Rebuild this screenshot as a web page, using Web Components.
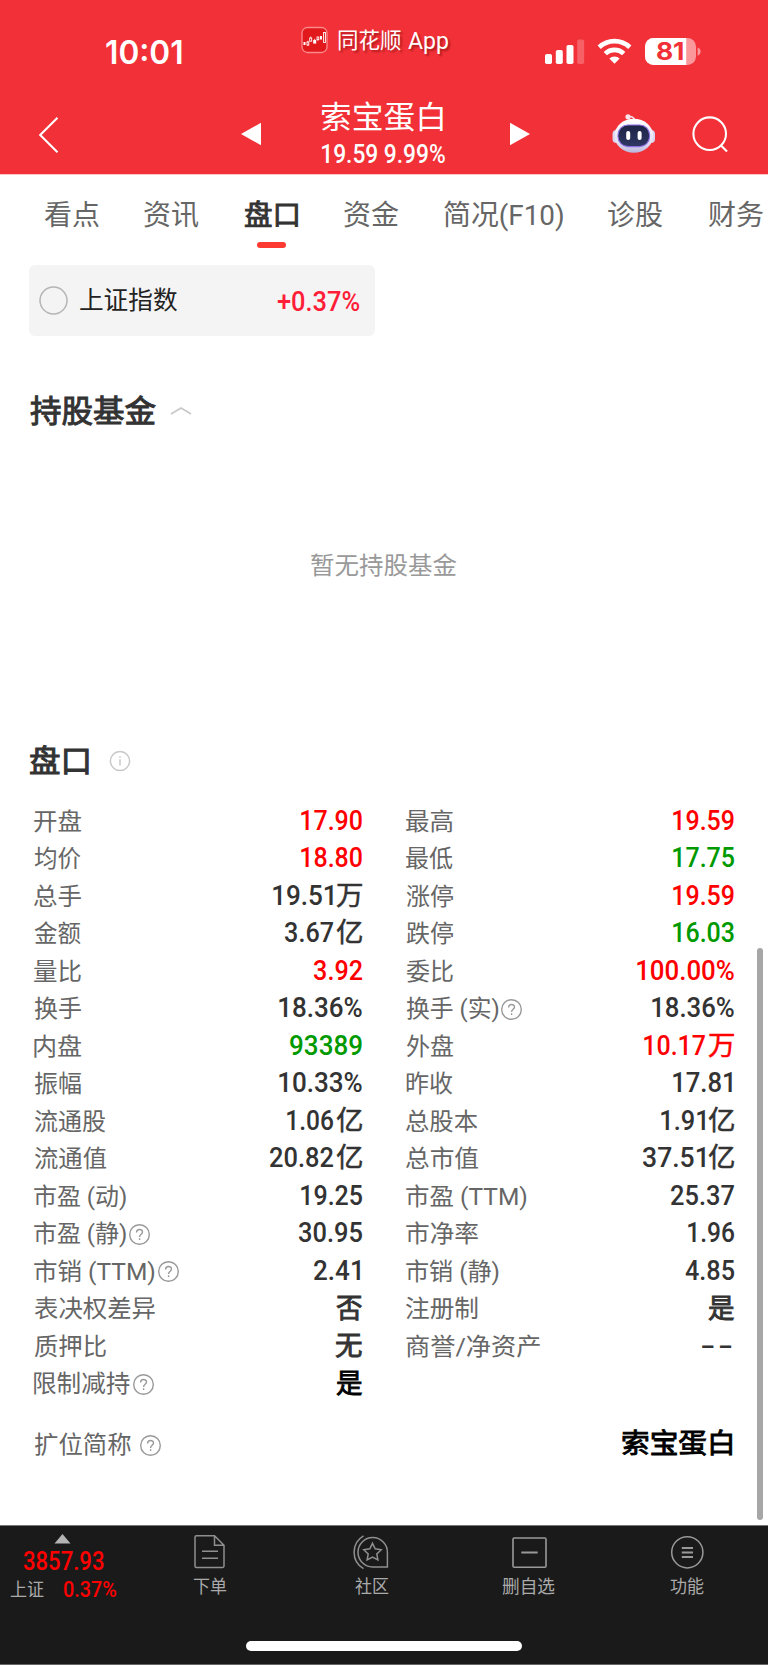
<!DOCTYPE html>
<html lang="zh-CN">
<head>
<meta charset="utf-8">
<title>索宝蛋白 盘口</title>
<style>
  html, body { margin: 0; background: #fff; }
  body { width: 768px; height: 1665px; overflow: hidden; font-family: Roboto, "Noto Sans CJK SC", sans-serif; }
</style>
</head>
<body>
<stock-page></stock-page>

<template id="t-page">
  <style>
    :host { display: flex; flex-direction: column; width: 768px; height: 1665px; position: relative; background: #fff; color: #333; }
    main { flex: 1; display: flex; flex-direction: column; align-items: flex-start; }
    .empty { align-self: stretch; display: flex; justify-content: center; align-items: center; height: 100px; margin-top: 80px; font-size: 24px; color: #999; }
    .scroll { position: absolute; left: 757px; top: 948px; width: 6px; height: 572px; border-radius: 3px; background: #a6a6a6; }
  </style>
  <app-header></app-header>
  <stock-tabs></stock-tabs>
  <main>
    <index-chip></index-chip>
    <section-title style="margin-top:50px"><fit-text w="126">持股基金</fit-text>
      <svg slot="icon" style="margin:-2px 0 0 14px" width="22" height="9" viewBox="0 0 22 9" fill="none" stroke="#c8c8c8" stroke-width="1.7"><path d="M1 8 11 2 21 8"/></svg>
    </section-title>
    <div class="empty"><fit-text w="146">暂无持股基金</fit-text></div>
    <section-title style="margin-top:120px"><fit-text w="59">盘口</fit-text>
      <svg slot="icon" style="margin-left:20px" width="22" height="22" viewBox="0 0 22 22" fill="none" stroke="#c8c8c8" stroke-width="1.5"><circle cx="11" cy="11" r="9.6"/><path d="M11 9.3V15.4M11 6.2V7.8"/></svg>
    </section-title>
    <quote-grid></quote-grid>
  </main>
  <bottom-bar></bottom-bar>
  <div class="scroll"></div>
</template>

<template id="t-header">
  <style>
    :host { display: block; height: 174px; background: #f23037; color: #fff; border-bottom: 1px solid #fbc5c8; flex: none; }
    .status { height: 90px; display: flex; align-items: flex-start; }
    .time { margin: 37px 0 0 106px; font: 600 32px/32px Inter, sans-serif; }
    .app { display: flex; align-items: center; height: 28px; margin: 26px 0 0 119px; font-size: 21.5px; text-shadow: 2px 2px 2px rgba(90,0,0,.45); }
    .sys { display: flex; align-items: flex-end; margin: 37px 0 0 97px; }
    .nav { height: 84px; display: flex; align-items: flex-start; }
    .title { display: flex; flex-direction: column; align-items: center; margin: 12px 0 0 59px; width: 124px; }
    svg { display: block; flex: none; }
    .batt { position: relative; width: 56px; height: 28px; margin-left: 12px; }
    .batt fit-text { position: absolute; left: 12px; top: 3px; font: 700 24px/24px Inter, sans-serif; color: #f23037; }
  </style>
  <div class="status">
    <div class="time"><fit-text w="76">10:01</fit-text></div>
    <div class="app">
      <svg width="27" height="28" viewBox="0 0 27 28"><rect x="1" y="1.5" width="25" height="25" rx="5.5" fill="#e2191c" stroke="#fa8a8c" stroke-width="1.3"/><g fill="#fff"><rect x="2.5" y="16" width="2" height="3"/><rect x="12.2" y="14" width="3" height="3.6"/><rect x="19" y="10" width="2" height="3.5"/></g><g fill="none" stroke="#fff" stroke-width=".9"><rect x="6" y="16" width="1.8" height="3"/><path d="M6.9 14.8v1.2M6.9 19v1"/><rect x="8.7" y="12" width="2" height="3.2"/><path d="M9.7 10.6V12M13.7 12.8v1.2M16.9 13.6v1.2"/><rect x="16" y="11" width="1.8" height="2.6"/><rect x="22.6" y="6.5" width="1.8" height="10"/></g></svg>
      <fit-text w="63" style="margin-left:10px;position:relative;top:1px">同花顺</fit-text><fit-text w="40" style="margin-left:7px;position:relative;top:1px;font-size:23px">App</fit-text>
    </div>
    <div class="sys">
      <svg width="40" height="28" viewBox="0 0 40 28" fill="#fff"><rect x="0" y="17" width="7" height="10" rx="1.8"/><rect x="10.8" y="13" width="7" height="14" rx="1.8"/><rect x="21.5" y="8" width="7" height="19" rx="1.8"/><rect x="32.2" y="2.5" width="7" height="24.5" rx="1.8" fill="#f66067"/></svg>
      <svg style="margin-left:11px" width="37" height="28" viewBox="0 0 37 28" fill="none" stroke="#fff" stroke-width="4.7"><path d="M3.2 10.3a22 22 0 0 1 30.6 0"/><path d="M9.3 16.6a13.2 13.2 0 0 1 18.4 0"/><path d="M18.5 26.7 13.3 21.6a7.8 7.8 0 0 1 10.4 0z" fill="#fff" stroke="none"/></svg>
      <div class="batt">
        <svg width="56" height="28" viewBox="0 0 56 28"><defs><clipPath id="b"><rect x="0" y="1" width="51" height="27" rx="8.5"/></clipPath></defs><g clip-path="url(#b)"><rect y="1" width="51" height="27" fill="#fa989c"/><rect y="1" width="41.2" height="27" fill="#fff"/></g><path d="M52.6 10.5c4 1.2 4 7 0 8.2z" fill="#fa989c"/></svg>
        <fit-text w="26">81</fit-text>
      </div>
    </div>
  </div>
  <div class="nav">
    <svg style="margin:26px 0 0 38px" width="22" height="38" viewBox="0 0 22 38" fill="none" stroke="#fff" stroke-width="2.1"><path d="M19.5 1.7 2.2 19 19.5 36.3"/></svg>
    <svg style="margin:32px 0 0 180px" width="21" height="24" viewBox="0 0 21 24" fill="#fff"><path d="M1 12 21 .7V23.3z"/></svg>
    <div class="title">
      <fit-text w="122" style="font-size:31px">索宝蛋白</fit-text>
      <fit-text w="123" style="font-size:25.5px;font-weight:500;margin-top:9px;position:relative;left:1px">19.59 9.99%</fit-text>
    </div>
    <svg style="margin:32px 0 0 66px" width="21" height="24" viewBox="0 0 21 24" fill="#fff"><path d="M0 .7 20 12 0 23.3z"/></svg>
    <svg style="margin:23px 0 0 81px" width="44" height="42" viewBox="0 0 44 42">
      <defs><linearGradient id="h" x1="0" y1="0" x2="0" y2="1"><stop offset="0" stop-color="#fff"/><stop offset=".7" stop-color="#e4e0f2"/><stop offset="1" stop-color="#b9b5dc"/></linearGradient><linearGradient id="f" x1="0" y1="0" x2="0" y2="1"><stop offset="0" stop-color="#1c2446"/><stop offset="1" stop-color="#2f3763"/></linearGradient></defs>
      <circle cx="16" cy="3.8" r="2.6" fill="#f6e6ee"/><path d="M16 3.6c4-.4 6.3 1.2 6.6 4" fill="none" stroke="#f6dfe8" stroke-width="1.6"/>
      <rect x=".5" y="17" width="8" height="13" rx="4" fill="#d9d5ee"/><rect x="35" y="17" width="8" height="13" rx="4" fill="#d9d5ee"/>
      <ellipse cx="21.8" cy="22.8" rx="19.4" ry="17" fill="url(#h)"/>
      <rect x="6" y="12" width="31.6" height="21.6" rx="10" fill="url(#f)" stroke="#8b6ee0" stroke-width="1.1"/>
      <rect x="14.2" y="18" width="4" height="9" rx="2" fill="#fff"/><rect x="25.6" y="18" width="4" height="9" rx="2" fill="#fff"/>
    </svg>
    <svg style="margin:25px 0 0 36px" width="38" height="40" viewBox="0 0 38 40" fill="none" stroke="#fff" stroke-width="2.1"><circle cx="17.7" cy="18.7" r="16.3"/><path d="M28.5 30 35 36.5"/></svg>
  </div>
</template>

<template id="t-tabs">
  <style>
    :host { display: flex; height: 90px; flex: none; padding-left: 44px; box-sizing: border-box; gap: 45px; overflow: hidden; font-size: 28px; color: #666; }
    div { display: flex; flex-direction: column; align-items: center; padding-top: 27px; }
    .on { color: #333; -webkit-text-stroke: .9px #333; }
    .on::after { content: ""; width: 29px; height: 6px; border-radius: 3px; background: #fd3a32; margin-top: 12px; }
  </style>
  <div><fit-text w="55">看点</fit-text></div><div><fit-text w="55">资讯</fit-text></div><div class="on" style="margin:0 1px"><fit-text w="53">盘口</fit-text></div><div><fit-text w="55">资金</fit-text></div><div><fit-text w="119">简况(F10)</fit-text></div><div><fit-text w="55">诊股</fit-text></div><div><fit-text w="55">财务</fit-text></div>
</template>

<template id="t-chip">
  <style>
    :host { display: flex; align-items: center; box-sizing: border-box; width: 346px; height: 71px; margin-left: 29px; padding: 0 15px 0 10px; border-radius: 6px; background: #f4f4f4; font-size: 24.5px; color: #222; }
    svg { margin: 0 12px 0 0; flex: none; }
    .name { position: relative; top: 1px; }
    .up { margin-left: auto; color: #ff1d38; font-weight: 500; font-size: 27.5px; position: relative; top: 1px; }
  </style>
  <svg width="29" height="29" viewBox="0 0 29 29" fill="none" stroke="#b5b5b5" stroke-width="1.5"><circle cx="14.5" cy="14.5" r="13.5"/></svg><fit-text class="name" w="97">上证指数</fit-text><fit-text class="up" w="83">+0.37%</fit-text>
</template>

<template id="t-section">
  <style>
    :host { display: flex; align-items: center; height: 50px; margin-left: 30px; font-size: 31px; color: #333; -webkit-text-stroke: 1px #333; }
    ::slotted(svg) { flex: none; }
  </style>
  <slot></slot><slot name="icon"></slot>
</template>

<template id="t-help">
  <style>:host { display: block; width: 21px; height: 21px; flex: none; margin-left: 3px; } svg { display: block; }</style>
  <svg width="21" height="21" viewBox="0 0 21 21" fill="none" stroke="#999" stroke-width="1.4"><circle cx="10.5" cy="10.5" r="9.8"/><path d="M7.6 8.4c0-3.9 5.9-3.8 5.9-.3 0 2.2-2.9 2.3-2.9 4.8M10.6 14.2v1.7"/></svg>
</template>

<template id="t-grid">
  <style>
    :host { display: block; width: 700px; margin: 17px 0 0 34px; }
    .g { display: grid; grid-template-columns: 328px 328.5px; column-gap: 43.5px; grid-auto-rows: 37.5px; }
    .last { display: flex; margin-top: 23px; height: 38px; }
    .last quote-row { flex: 1; }
  </style>
  <div class="g"></div>
  <div class="last"></div>
</template>

<template id="t-bar">
  <style>
    :host { display: flex; flex-direction: column; height: 140px; box-sizing: border-box; background: #1a1a1a; color: #aaa; flex: none; border-top: 1px solid #777; border-bottom: 1px solid #666; font-size: 18px; }
    .items { position: relative; height: 115px; display: flex; align-items: flex-start; }
    .idx { width: 126px; height: 80px; display: flex; flex-direction: column; }
    .idx svg { margin: 8px 0 7px 54px; display: block; }
    .red { color: #f00; font-weight: 500; }
    .sub { display: flex; align-items: center; margin: 8px 0 0 10px; }
    .it { display: flex; flex-direction: column; align-items: center; gap: 8px; padding-top: 8px; }
    .it svg { display: block; }
    .home { width: 276px; height: 10px; border-radius: 5px; background: #fff; margin: 0 auto; }
  </style>
  <div class="items">
    <div class="idx">
      <svg width="17" height="10" viewBox="0 0 17 10"><path d="M8.5 0 16.5 9.5H.5z" fill="#b4b4b4"/></svg>
      <fit-text class="red" w="81" style="font-size:25.5px;margin-left:22.5px;line-height:20px">3857.93</fit-text>
      <div class="sub"><fit-text w="34">上证</fit-text><fit-text class="red" w="52" style="font-size:21.5px;margin-left:20px">0.37%</fit-text></div>
    </div>
    <div class="it" style="margin-left:67px"><svg style="margin-left:-2px" width="32" height="36" viewBox="0 0 32 36" fill="none" stroke="#8f8f8f" stroke-width="1.5"><path d="M21.5 1.8H3.5a1.5 1.5 0 0 0-1.5 1.5V32a1.5 1.5 0 0 0 1.5 1.5h26a1.5 1.5 0 0 0 1.5-1.5V11.3zV11.3H31M9 17.2H25M9 24.2H25"/></svg><fit-text w="34">下单</fit-text></div>
    <div class="it" style="margin-left:124px"><svg width="38" height="36" viewBox="0 0 38 36" fill="none" stroke="#8f8f8f" stroke-width="1.5"><path d="M12.5 1.8a19 19 0 0 0 0 32.8"/><path d="M36.4 33H21.5a14.7 14.7 0 1 1 14.9-14.5z"/><path d="m21.5 9.3 2.7 5.5 6 .9-4.4 4.2 1.1 6-5.4-2.8-5.4 2.8 1.1-6-4.4-4.2 6-.9z"/></svg><fit-text w="34" style="position:relative;left:1.5px">社区</fit-text></div>
    <div class="it" style="margin-left:112.5px"><svg style="margin-left:2px" width="36" height="36" viewBox="0 0 36 36" fill="none" stroke="#999" stroke-width="1.6"><rect x="2" y="4" width="33" height="29.2" rx="1.3"/><path d="M10.3 18.5H26.7" stroke-width="2"/></svg><fit-text w="53">删自选</fit-text></div>
    <div class="it" style="margin-left:115px"><svg width="34" height="36" viewBox="0 0 34 36" fill="none" stroke="#999" stroke-width="1.5"><circle cx="17.3" cy="18.3" r="15.6"/><path d="M11.8 14H23M11.8 18.5H23M11.8 23H23" stroke-width="1.9"/></svg><fit-text w="34">功能</fit-text></div>
  </div>
  <div class="home"></div>
</template>

<script>
const ctx = document.createElement('canvas').getContext('2d');
const mount = (host, id) => {
  if (!host.shadowRoot) host.attachShadow({ mode: 'open' }).append(document.getElementById(id).content.cloneNode(true));
  return host.shadowRoot;
};

// A run of text whose inked width is exactly `w` pixels.
customElements.define('fit-text', class extends HTMLElement {
  connectedCallback() {
    if (this.shadowRoot) return;
    const root = this.attachShadow({ mode: 'open' });
    root.innerHTML = '<style>:host{display:block;white-space:nowrap;line-height:1;flex:none}span{display:inline-block;transform-origin:0 50%;vertical-align:top}</style><span><slot></slot></span>';
    const cs = getComputedStyle(this), w = +this.getAttribute('w');
    ctx.font = `${cs.fontWeight} ${cs.fontSize} ${cs.fontFamily}`;
    ctx.letterSpacing = cs.letterSpacing === 'normal' ? '0px' : cs.letterSpacing;
    const m = ctx.measureText(this.textContent.trim());
    const k = w / (m.actualBoundingBoxRight + m.actualBoundingBoxLeft);
    this.style.width = w + 'px';
    root.querySelector('span').style.transform = `translateX(${m.actualBoundingBoxLeft * k}px) scaleX(${k})`;
  }
});

customElements.define('help-icon', class extends HTMLElement { connectedCallback() { mount(this, 't-help'); } });

// One label and its right-aligned value, with an optional help mark and unit.
class QuoteRow extends HTMLElement {
  connectedCallback() {
    if (this.shadowRoot) return;
    const d = this.data, root = this.attachShadow({ mode: 'open' });
    const colors = { r: '#ff0000', g: '#009a00', k: '#333', b: '#000' }, c = colors[d.tone || 'k'];
    const stroke = d.value ? .5 : .9;
    const unit = d.unit ? `<fit-text class="u" w="${d.uw || 26}">${d.unit}</fit-text>` : '';
    const num = d.value ? `<fit-text w="${d.vw}"${d.value === '--' ? ' class="dash"' : ''}>${d.value}</fit-text>` : '';
    root.innerHTML = `<style>
      :host { display: flex; align-items: center; font-size: 24px; color: #666; }
      .v { margin-left: auto; margin-right: ${d.inset || 0}px; display: flex; align-items: center; gap: 3px; color: ${c}; font-size: 28.3px; font-weight: 500; position: relative; top: -1px; }
      .u { font-size: 27.5px; font-weight: 400; -webkit-text-stroke: ${stroke}px ${c}; }
      .dash { letter-spacing: 2px; }
    </style><fit-text w="${d.lw}">${d.label}</fit-text>${d.help !== undefined ? `<help-icon style="margin-left:${d.help}px"></help-icon>` : ''}<div class="v">${num}${unit}</div>`;
  }
}
customElements.define('quote-row', QuoteRow);

const L = (label, lw, value, vw, tone, unit, extra = {}) => ({ label, lw, value, vw, tone, unit, ...extra });
const rows = [
  L('开盘',47,'17.90',61,'r'), L('最高',47,'19.59',61,'r'),
  L('均价',47,'18.80',61,'r'), L('最低',47,'17.75',61,'g'),
  L('总手',47,'19.51',60,'k','万'), L('涨停',47,'19.59',61,'r'),
  L('金额',47,'3.67',48,'k','亿'), L('跌停',47,'16.03',61,'g'),
  L('量比',47,'3.92',48,'r'), L('委比',47,'100.00%',97,'r'),
  L('换手',47,'18.36%',83,'k'), L('换手 (实)',92.5,'18.36%',82,'k','',{help:3}),
  L('内盘',47,'93389',72,'g'), L('外盘',47,'10.17',61,'r','万'),
  L('振幅',47,'10.33%',83,'k'), L('昨收',47,'17.81',59,'k','',{inset:2}),
  L('流通股',72,'1.06',46,'k','亿'), L('总股本',72,'1.91',44,'k','亿',{ugap:5}),
  L('流通值',72,'20.82',63,'k','亿'), L('总市值',72,'37.51',62,'k','亿'),
  L('市盈 (动)',92,'19.25',61,'k'), L('市盈 (TTM)',120.5,'25.37',63,'k'),
  L('市盈 (静)',92,'30.95',63,'k','',{help:3}), L('市净率',72,'1.96',46,'k'),
  L('市销 (TTM)',120.5,'2.41',46,'k','',{help:3,inset:2}), L('市销 (静)',92.5,'4.85',49,'k'),
  L('表决权差异',121,'',0,'k','否'), L('注册制',72,'',0,'k','是'),
  L('质押比',72,'',0,'k','无'), L('商誉/净资产',134.5,'--',30,'k','',{inset:2}),
  L('限制减持',96.5,'',0,'b','是',{help:2}),
];
customElements.define('quote-grid', class extends HTMLElement {
  connectedCallback() {
    const root = mount(this, 't-grid');
    const add = (sel, data) => { const r = document.createElement('quote-row'); r.data = data; root.querySelector(sel).append(r); };
    rows.forEach(d => add('.g', d));
    add('.last', L('扩位简称',96.5,'',0,'b','索宝蛋白',{help:9,uw:110,inset:2}));
  }
});

for (const [tag, id] of [['app-header','t-header'],['stock-tabs','t-tabs'],['index-chip','t-chip'],['section-title','t-section'],['bottom-bar','t-bar'],['stock-page','t-page']])
  customElements.define(tag, class extends HTMLElement { connectedCallback() { mount(this, id); } });
</script>
</body>
</html>
